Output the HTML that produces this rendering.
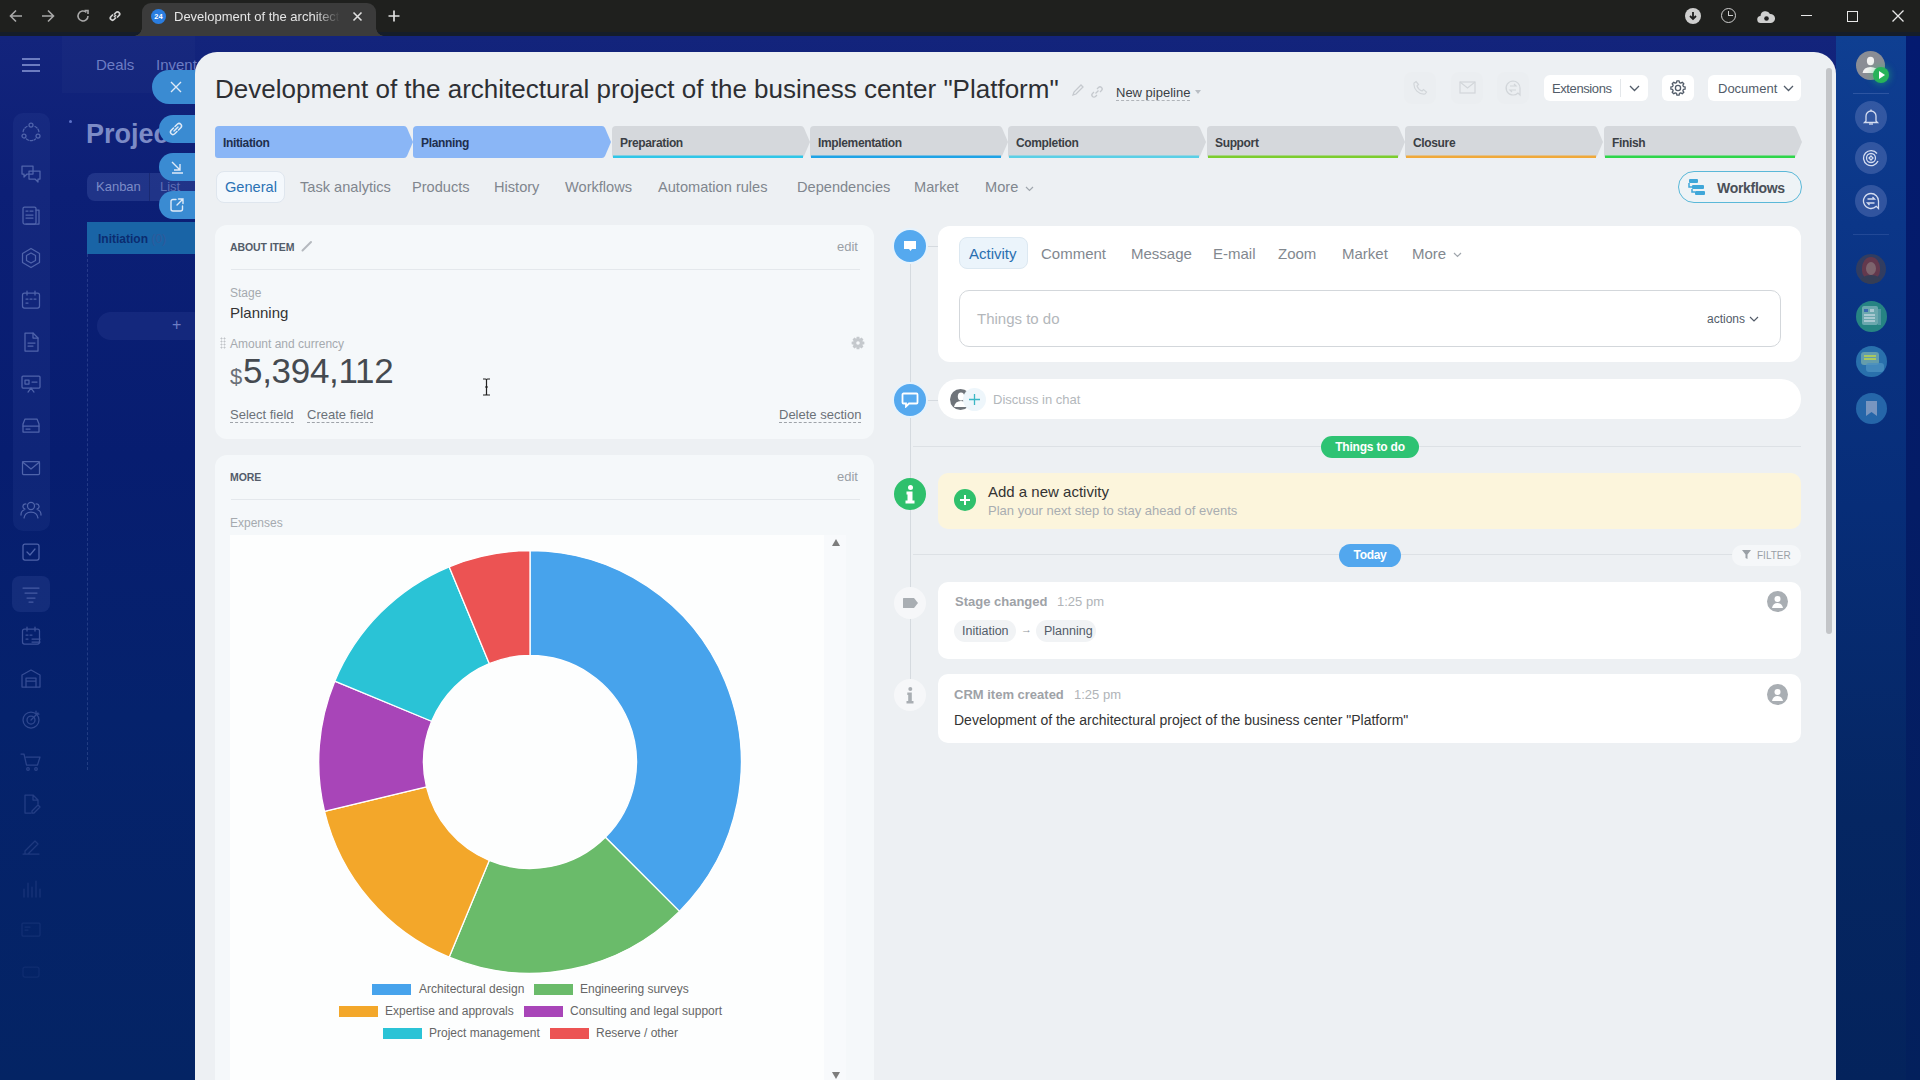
<!DOCTYPE html>
<html><head><meta charset="utf-8">
<style>
*{margin:0;padding:0;box-sizing:border-box}
html,body{width:1920px;height:1080px;overflow:hidden}
body{font-family:"Liberation Sans",sans-serif;background:#0f237c;position:relative;color:#333}
.a{position:absolute}
svg{display:block}
#bar{left:0;top:0;width:1920px;height:36px;background:#1f201e;border-bottom:4px solid #151d2a}
#tab{left:142px;top:3px;width:234px;height:33px;background:#3b3b3b;border-radius:9px 9px 0 0}
#bg{left:0;top:36px;width:1920px;height:1044px;background:linear-gradient(180deg,#13247c 0%,#0c1f76 15%,#071d70 40%,#05226c 65%,#042464 100%)}
#lnav{left:13px;top:113px;width:37px;height:418px;background:rgba(120,140,220,0.08);border-radius:10px}
.ni{left:20px;width:22px;height:22px}
#panel{left:195px;top:52px;width:1641px;height:1028px;background:#edf0f3;border-radius:22px 22px 0 0;overflow:hidden}
#rside{left:1836px;top:36px;width:70px;height:1044px;background:linear-gradient(180deg,#0f3f92 0%,#0b3688 18%,#072d78 45%,#052662 75%,#04235c 100%)}
#rside2{left:1906px;top:36px;width:14px;height:1044px;background:linear-gradient(180deg,#041a70 0%,#041c66 45%,#03205c 100%)}
.rb{width:32px;height:32px;border-radius:50%;background:rgba(120,140,200,0.35);left:1855px}
.sb{left:152px;background:#3a8bd2;border-radius:17px 0 0 17px}
</style></head><body>
<div id="bg" class="a"></div>
<!-- background app -->
<div class="a" style="left:62px;top:36px;width:133px;height:57px;background:rgba(255,255,255,0.02)"></div>
<div class="a" style="left:22px;top:58px;width:18px;height:2px;background:#6c7cc0;box-shadow:0 6px 0 #6c7cc0,0 12px 0 #6c7cc0"></div>
<div class="a" style="left:96px;top:56px;font-size:15px;color:#6d7dc4">Deals</div>
<div class="a" style="left:156px;top:56px;font-size:15px;color:#6d7dc4">Inventory</div>
<div class="a" style="left:86px;top:119px;font-size:27px;font-weight:bold;color:#7c8bc6">Projects</div>
<div class="a" style="left:69px;top:120px;width:3px;height:3px;border-radius:50%;background:#5d72c8"></div>
<div class="a" style="left:87px;top:173px;width:110px;height:28px;border-radius:8px;background:rgba(130,150,220,0.18)"></div>
<div class="a" style="left:149px;top:173px;width:1px;height:28px;background:rgba(0,0,30,0.2)"></div>
<div class="a" style="left:96px;top:179px;font-size:13px;color:#7c8bc6">Kanban</div>
<div class="a" style="left:160px;top:179px;font-size:13px;color:#5f6fb5">List</div>
<div class="a" style="left:87px;top:222px;width:120px;height:32px;background:#1964a6"></div>
<div class="a" style="left:98px;top:232px;font-size:12px;font-weight:bold;color:#0b2c70">Initiation <span style="font-weight:normal;color:#2f5a9a">(0)</span></div>
<div class="a" style="left:87px;top:254px;width:0;height:516px;border-left:1px dashed rgba(140,160,220,0.22)"></div>
<div class="a" style="left:97px;top:312px;width:110px;height:28px;border-radius:14px;background:rgba(120,140,220,0.1)"></div>
<div class="a" style="left:172px;top:316px;font-size:16px;color:#6d7dc4">+</div>

<div id="lnav" class="a"></div>
<!-- lnav icons -->
<div class="a" style="left:20px;top:121px;opacity:0.85"><svg width="22" height="22" viewBox="0 0 22 22" fill="none" stroke="#5b6fb4" stroke-width="1.25" stroke-linecap="round" stroke-linejoin="round"><circle cx="11" cy="4" r="2"/><circle cx="4" cy="15" r="2"/><circle cx="18" cy="15" r="2"/><path d="M7 5.5a7 7 0 0 0-4 6.5M15 5.5a7 7 0 0 1 4 6.5M6.5 18a7 7 0 0 0 9 0" stroke-dasharray="2.5 1.5"/></svg></div>
<div class="a" style="left:20px;top:163px;opacity:0.85"><svg width="22" height="22" viewBox="0 0 22 22" fill="none" stroke="#5b6fb4" stroke-width="1.25" stroke-linecap="round" stroke-linejoin="round"><path d="M2 3h11v8H7l-3 3v-3H2z"/><path d="M9 8h11v8h-2v3l-3-3H9z"/></svg></div>
<div class="a" style="left:20px;top:205px;opacity:0.85"><svg width="22" height="22" viewBox="0 0 22 22" fill="none" stroke="#5b6fb4" stroke-width="1.25" stroke-linecap="round" stroke-linejoin="round"><rect x="3" y="2" width="13" height="17" rx="1.5"/><path d="M16 5h3v14H6M6 6h2M10 6h3M6 10h7M6 13h7"/></svg></div>
<div class="a" style="left:20px;top:247px;opacity:0.85"><svg width="22" height="22" viewBox="0 0 22 22" fill="none" stroke="#5b6fb4" stroke-width="1.25" stroke-linecap="round" stroke-linejoin="round"><path d="M11 1.5l8.5 5v9L11 20.5 2.5 15.5v-9z"/><path d="M11 6l4.5 2.5v5L11 16l-4.5-2.5v-5z"/></svg></div>
<div class="a" style="left:20px;top:289px;opacity:0.85"><svg width="22" height="22" viewBox="0 0 22 22" fill="none" stroke="#5b6fb4" stroke-width="1.25" stroke-linecap="round" stroke-linejoin="round"><rect x="2.5" y="4" width="17" height="15" rx="2"/><path d="M7 2v4M15 2v4M6 10h2M10 10h2M14 10h2M6 14h2"/></svg></div>
<div class="a" style="left:20px;top:331px;opacity:0.85"><svg width="22" height="22" viewBox="0 0 22 22" fill="none" stroke="#5b6fb4" stroke-width="1.25" stroke-linecap="round" stroke-linejoin="round"><path d="M5 2h8l5 5v13H5z"/><path d="M13 2v5h5M8 12h7M8 15h5"/></svg></div>
<div class="a" style="left:20px;top:373px;opacity:0.85"><svg width="22" height="22" viewBox="0 0 22 22" fill="none" stroke="#5b6fb4" stroke-width="1.25" stroke-linecap="round" stroke-linejoin="round"><rect x="2" y="3" width="18" height="12" rx="1"/><path d="M5 7h4v4H5zM12 9h5M11 15l-3 4M11 15l3 4"/></svg></div>
<div class="a" style="left:20px;top:415px;opacity:0.85"><svg width="22" height="22" viewBox="0 0 22 22" fill="none" stroke="#5b6fb4" stroke-width="1.25" stroke-linecap="round" stroke-linejoin="round"><path d="M3 9l2-5h12l2 5v8H3z"/><path d="M3 11h16M6 14h4"/></svg></div>
<div class="a" style="left:20px;top:457px;opacity:0.85"><svg width="22" height="22" viewBox="0 0 22 22" fill="none" stroke="#5b6fb4" stroke-width="1.25" stroke-linecap="round" stroke-linejoin="round"><rect x="2.5" y="4.5" width="17" height="13" rx="1"/><path d="M2.5 5l8.5 7 8.5-7"/></svg></div>
<div class="a" style="left:20px;top:499px;opacity:0.85"><svg width="22" height="22" viewBox="0 0 22 22" fill="none" stroke="#5b6fb4" stroke-width="1.25" stroke-linecap="round" stroke-linejoin="round"><circle cx="11" cy="7" r="3.5"/><path d="M4 19q1-6 7-6t7 6M5 10a2.5 2.5 0 1 1 1-5M17 10a2.5 2.5 0 1 0-1-5M1 16q0-4 3-5M21 16q0-4-3-5"/></svg></div>
<div class="a" style="left:20px;top:541px;opacity:0.85"><svg width="22" height="22" viewBox="0 0 22 22" fill="none" stroke="#5b6fb4" stroke-width="1.25" stroke-linecap="round" stroke-linejoin="round"><rect x="3" y="3" width="16" height="16" rx="2"/><path d="M7 11l3 3 5-6"/></svg></div>
<div class="a" style="left:12px;top:576px;width:38px;height:36px;border-radius:8px;background:rgba(120,140,220,0.12)"></div>
<div class="a" style="left:20px;top:583px;opacity:0.70"><svg width="22" height="22" viewBox="0 0 22 22" fill="none" stroke="#5b6fb4" stroke-width="1.25" stroke-linecap="round" stroke-linejoin="round"><path d="M3 5h16M5 10h12M7 15h8M9 19h4"/></svg></div>
<div class="a" style="left:20px;top:625px;opacity:0.63"><svg width="22" height="22" viewBox="0 0 22 22" fill="none" stroke="#5b6fb4" stroke-width="1.25" stroke-linecap="round" stroke-linejoin="round"><rect x="2.5" y="4" width="17" height="15" rx="2"/><path d="M7 2v4M15 2v4M6 10h2M10 10h2M6 14h2M12 14h8M12 17h8"/></svg></div>
<div class="a" style="left:20px;top:667px;opacity:0.56"><svg width="22" height="22" viewBox="0 0 22 22" fill="none" stroke="#5b6fb4" stroke-width="1.25" stroke-linecap="round" stroke-linejoin="round"><path d="M2 8l9-5 9 5v12H2z"/><path d="M6 20v-9h10v9M6 14h10"/></svg></div>
<div class="a" style="left:20px;top:709px;opacity:0.50"><svg width="22" height="22" viewBox="0 0 22 22" fill="none" stroke="#5b6fb4" stroke-width="1.25" stroke-linecap="round" stroke-linejoin="round"><circle cx="11" cy="11" r="8"/><circle cx="11" cy="11" r="4"/><path d="M11 11l7-7M16 2v3h3"/></svg></div>
<div class="a" style="left:20px;top:751px;opacity:0.43"><svg width="22" height="22" viewBox="0 0 22 22" fill="none" stroke="#5b6fb4" stroke-width="1.25" stroke-linecap="round" stroke-linejoin="round"><path d="M1 3h3l2.5 11h11L20 6H6"/><circle cx="8" cy="18" r="1.3"/><circle cx="16" cy="18" r="1.3"/></svg></div>
<div class="a" style="left:20px;top:793px;opacity:0.36"><svg width="22" height="22" viewBox="0 0 22 22" fill="none" stroke="#5b6fb4" stroke-width="1.25" stroke-linecap="round" stroke-linejoin="round"><path d="M5 2h8l5 5v4M13 2v5h5M5 2v18h6"/><path d="M12 18l6-6 2 2-6 6h-2z"/></svg></div>
<div class="a" style="left:20px;top:835px;opacity:0.29"><svg width="22" height="22" viewBox="0 0 22 22" fill="none" stroke="#5b6fb4" stroke-width="1.25" stroke-linecap="round" stroke-linejoin="round"><path d="M3 19h16M5 16l10-10 3 3-10 10H5z"/></svg></div>
<div class="a" style="left:20px;top:877px;opacity:0.22"><svg width="22" height="22" viewBox="0 0 22 22" fill="none" stroke="#5b6fb4" stroke-width="1.25" stroke-linecap="round" stroke-linejoin="round"><path d="M4 20V12M8 20V6M12 20V10M16 20V4M20 20v-8"/></svg></div>
<div class="a" style="left:20px;top:919px;opacity:0.16"><svg width="22" height="22" viewBox="0 0 22 22" fill="none" stroke="#5b6fb4" stroke-width="1.25" stroke-linecap="round" stroke-linejoin="round"><rect x="2" y="4" width="18" height="13" rx="1"/><path d="M5 8h5M5 11h3"/></svg></div>
<div class="a" style="left:20px;top:961px;opacity:0.12"><svg width="22" height="22" viewBox="0 0 22 22" fill="none" stroke="#5b6fb4" stroke-width="1.25" stroke-linecap="round" stroke-linejoin="round"><rect x="3" y="6" width="16" height="10" rx="2"/></svg></div>

<!-- side buttons -->
<div class="a sb" style="top:70px;width:60px;height:34px"></div>
<div class="a sb" style="left:159px;top:115px;width:50px;height:28px;border-radius:14px 0 0 14px"></div>
<div class="a sb" style="left:159px;top:153px;width:50px;height:28px;border-radius:14px 0 0 14px"></div>
<div class="a sb" style="left:159px;top:191px;width:50px;height:28px;border-radius:14px 0 0 14px"></div>

<div class="a" style="left:170px;top:81px"><svg width="12" height="12" viewBox="0 0 12 12"><path d="M1 1l10 10M11 1L1 11" stroke="#dfeaf7" stroke-width="1.4"/></svg></div>
<div class="a" style="left:167px;top:120px"><svg width="18" height="18" viewBox="0 0 18 18"><path d="M7 11l4-4M6.5 8L4 10.5a2.5 2.5 0 0 0 3.5 3.5L10 11.5M11.5 10L14 7.5A2.5 2.5 0 0 0 10.5 4L8 6.5" fill="none" stroke="#dfeaf7" stroke-width="1.5" stroke-linecap="round"/></svg></div>
<div class="a" style="left:170px;top:160px"><svg width="14" height="14" viewBox="0 0 14 14"><path d="M2 2l8 8M4 10h6V4M2 13h11" fill="none" stroke="#dfeaf7" stroke-width="1.4"/></svg></div>
<div class="a" style="left:169px;top:197px"><svg width="16" height="16" viewBox="0 0 16 16"><path d="M7 2.5H4a2 2 0 0 0-2 2v7.5a2 2 0 0 0 2 2h7.5a2 2 0 0 0 2-2V9M9.5 2h4.5v4.5M14 2L8 8" fill="none" stroke="#dfeaf7" stroke-width="1.4" stroke-linecap="round"/></svg></div>
<div id="bar" class="a"></div>
<div id="tab" class="a"></div>
<div class="a" style="left:134px;top:28px;width:8px;height:8px;background:radial-gradient(circle at 0 0,transparent 7.5px,#3b3b3b 8px)"></div>
<div class="a" style="left:376px;top:28px;width:8px;height:8px;background:radial-gradient(circle at 100% 0,transparent 7.5px,#3b3b3b 8px)"></div>
<!-- browser chrome -->
<div class="a" style="left:9px;top:9px"><svg width="14" height="14" viewBox="0 0 14 14"><path d="M13 7H1.5M7 1.5L1.5 7 7 12.5" fill="none" stroke="#a9a9a9" stroke-width="1.6"/></svg></div>
<div class="a" style="left:41px;top:9px"><svg width="14" height="14" viewBox="0 0 14 14"><path d="M1 7h11.5M7 1.5L12.5 7 7 12.5" fill="none" stroke="#a9a9a9" stroke-width="1.6"/></svg></div>
<div class="a" style="left:76px;top:9px"><svg width="14" height="14" viewBox="0 0 14 14"><path d="M12 7a5 5 0 1 1-1.6-3.7" fill="none" stroke="#a9a9a9" stroke-width="1.6"/><path d="M8.5 1.5h3.5v3.5" fill="none" stroke="#a9a9a9" stroke-width="1.6"/></svg></div>
<div class="a" style="left:108px;top:9px"><svg width="14" height="14" viewBox="0 0 14 14"><path d="M6 8l2-2M5 5.5L3 7.5a2.1 2.1 0 0 0 3 3l2-2M9 8.5l2-2a2.1 2.1 0 0 0-3-3l-2 2" fill="none" stroke="#d4d4d4" stroke-width="1.7"/></svg></div>
<div class="a" style="left:151px;top:9px;width:15px;height:15px;border-radius:50%;background:#2a7de0"></div>
<div class="a" style="left:151px;top:12px;width:15px;text-align:center;font-size:7.5px;font-weight:bold;color:#fff">24</div>
<div class="a" style="left:174px;top:9px;width:166px;height:18px;overflow:hidden;white-space:nowrap;font-size:13px;color:#e6e6e6;-webkit-mask-image:linear-gradient(90deg,#000 85%,transparent)">Development of the architectural</div>
<div class="a" style="left:352px;top:11px"><svg width="11" height="11" viewBox="0 0 11 11"><path d="M1.5 1.5l8 8M9.5 1.5l-8 8" stroke="#e0e0e0" stroke-width="1.6"/></svg></div>
<div class="a" style="left:388px;top:10px"><svg width="12" height="12" viewBox="0 0 12 12"><path d="M6 0.5v11M0.5 6h11" stroke="#e0e0e0" stroke-width="1.7"/></svg></div>
<div class="a" style="left:1685px;top:8px;width:16px;height:16px;border-radius:50%;background:#cfcfcf"></div>
<div class="a" style="left:1688px;top:11px"><svg width="10" height="10" viewBox="0 0 10 10"><path d="M5 1v7M2 5l3 3 3-3" fill="none" stroke="#1f1f1f" stroke-width="1.8"/></svg></div>
<div class="a" style="left:1721px;top:8px;width:15px;height:15px;border-radius:50%;border:1.6px solid #cfcfcf"></div>
<div class="a" style="left:1728px;top:11px;width:5px;height:5px;border-left:1.6px solid #cfcfcf;border-bottom:1.6px solid #cfcfcf"></div>
<div class="a" style="left:1757px;top:9px"><svg width="18" height="15" viewBox="0 0 18 15"><path d="M4 14a3.5 3.5 0 0 1-.5-7A5 5 0 0 1 13 5a4.5 4.5 0 0 1 1 9z" fill="#cfcfcf"/><circle cx="9.5" cy="9.5" r="2.3" fill="#1f1f1f"/></svg></div>
<div class="a" style="left:1801px;top:15px;width:11px;height:1.3px;background:#e8e8e8"></div>
<div class="a" style="left:1847px;top:11px;width:11px;height:11px;border:1.3px solid #e8e8e8"></div>
<div class="a" style="left:1892px;top:10px"><svg width="12" height="12" viewBox="0 0 12 12"><path d="M0.5 0.5l11 11M11.5 0.5l-11 11" stroke="#e8e8e8" stroke-width="1.3"/></svg></div>


<div id="panel" class="a"></div>
<!-- header -->
<div class="a" style="left:215px;top:74px;font-size:26px;color:#2d2f33;white-space:nowrap;letter-spacing:0px" id="title">Development of the architectural project of the business center "Platform"</div>
<div class="a" style="left:1070px;top:82px"><svg width="16" height="16" viewBox="0 0 16 16"><path d="M3 13l1-3 7-7 2 2-7 7z" fill="none" stroke="#c5c9ce" stroke-width="1.3"/></svg></div>
<div class="a" style="left:1089px;top:84px"><svg width="16" height="16" viewBox="0 0 16 16"><path d="M6.5 9.5l3-3M5 8l-1.5 1.5a2 2 0 0 0 3 3L8 11M11 8l1.5-1.5a2 2 0 0 0-3-3L8 5" fill="none" stroke="#c5c9ce" stroke-width="1.3"/></svg></div>
<div class="a" style="left:1116px;top:85px;font-size:13px;color:#3a3f45;border-bottom:1px dashed #b0b4b9;line-height:15px">New pipeline</div>
<div class="a" style="left:1195px;top:90px;width:0;height:0;border-left:3.5px solid transparent;border-right:3.5px solid transparent;border-top:4px solid #b9bec4"></div>

<div class="a" style="left:215px;top:126px"><svg width="200" height="33" viewBox="0 0 200 33"><path d="M4 0 H189 Q191 0 192 2 L198 16 L192 30 Q191 32 189 32 H3 Q0 32 0 29 V4 Q0 0 4 0Z" fill="#8ab6f6"/></svg></div>
<div class="a" style="left:223px;top:136px;font-size:12px;font-weight:bold;letter-spacing:-0.35px;color:#1e2f4d">Initiation</div>
<div class="a" style="left:413px;top:126px"><svg width="200" height="33" viewBox="0 0 200 33"><path d="M4 0 H189 Q191 0 192 2 L198 16 L192 30 Q191 32 189 32 H3 Q0 32 0 29 V4 Q0 0 4 0Z" fill="#8ab6f6"/></svg></div>
<div class="a" style="left:421px;top:136px;font-size:12px;font-weight:bold;letter-spacing:-0.35px;color:#1e2f4d">Planning</div>
<div class="a" style="left:612px;top:126px"><svg width="200" height="33" viewBox="0 0 200 33"><path d="M4 0 H189 Q191 0 192 2 L198 16 L192 30 Q191 32 189 32 H3 Q0 32 0 29 V4 Q0 0 4 0Z" fill="#d5d8dc"/><path d="M1 30.7 L191 30.7" stroke="#2fc6e8" stroke-width="2.6" fill="none"/></svg></div>
<div class="a" style="left:620px;top:136px;font-size:12px;font-weight:bold;letter-spacing:-0.35px;color:#3b3f45">Preparation</div>
<div class="a" style="left:810px;top:126px"><svg width="200" height="33" viewBox="0 0 200 33"><path d="M4 0 H189 Q191 0 192 2 L198 16 L192 30 Q191 32 189 32 H3 Q0 32 0 29 V4 Q0 0 4 0Z" fill="#d5d8dc"/><path d="M1 30.7 L191 30.7" stroke="#1ea3e6" stroke-width="2.6" fill="none"/></svg></div>
<div class="a" style="left:818px;top:136px;font-size:12px;font-weight:bold;letter-spacing:-0.35px;color:#3b3f45">Implementation</div>
<div class="a" style="left:1008px;top:126px"><svg width="200" height="33" viewBox="0 0 200 33"><path d="M4 0 H189 Q191 0 192 2 L198 16 L192 30 Q191 32 189 32 H3 Q0 32 0 29 V4 Q0 0 4 0Z" fill="#d5d8dc"/><path d="M1 30.7 L191 30.7" stroke="#5acfe6" stroke-width="2.6" fill="none"/></svg></div>
<div class="a" style="left:1016px;top:136px;font-size:12px;font-weight:bold;letter-spacing:-0.35px;color:#3b3f45">Completion</div>
<div class="a" style="left:1207px;top:126px"><svg width="200" height="33" viewBox="0 0 200 33"><path d="M4 0 H189 Q191 0 192 2 L198 16 L192 30 Q191 32 189 32 H3 Q0 32 0 29 V4 Q0 0 4 0Z" fill="#d5d8dc"/><path d="M1 30.7 L191 30.7" stroke="#7ccd2e" stroke-width="2.6" fill="none"/></svg></div>
<div class="a" style="left:1215px;top:136px;font-size:12px;font-weight:bold;letter-spacing:-0.35px;color:#3b3f45">Support</div>
<div class="a" style="left:1405px;top:126px"><svg width="200" height="33" viewBox="0 0 200 33"><path d="M4 0 H189 Q191 0 192 2 L198 16 L192 30 Q191 32 189 32 H3 Q0 32 0 29 V4 Q0 0 4 0Z" fill="#d5d8dc"/><path d="M1 30.7 L191 30.7" stroke="#f0a93a" stroke-width="2.6" fill="none"/></svg></div>
<div class="a" style="left:1413px;top:136px;font-size:12px;font-weight:bold;letter-spacing:-0.35px;color:#3b3f45">Closure</div>
<div class="a" style="left:1604px;top:126px"><svg width="200" height="33" viewBox="0 0 200 33"><path d="M4 0 H189 Q191 0 192 2 L198 16 L192 30 Q191 32 189 32 H3 Q0 32 0 29 V4 Q0 0 4 0Z" fill="#d5d8dc"/><path d="M1 30.7 L191 30.7" stroke="#2ed64a" stroke-width="2.6" fill="none"/></svg></div>
<div class="a" style="left:1612px;top:136px;font-size:12px;font-weight:bold;letter-spacing:-0.35px;color:#3b3f45">Finish</div>
<div class="a" style="left:216px;top:171px;width:69px;height:32px;border-radius:8px;background:#f4f8fc;border:1px solid #dfe6ee"></div>
<div class="a" style="left:225px;top:179px;font-size:14.6px;color:#2a72b5">General</div>
<div class="a" style="left:300px;top:179px;font-size:14.6px;color:#80868e">Task analytics</div>
<div class="a" style="left:412px;top:179px;font-size:14.6px;color:#80868e">Products</div>
<div class="a" style="left:494px;top:179px;font-size:14.6px;color:#80868e">History</div>
<div class="a" style="left:565px;top:179px;font-size:14.6px;color:#80868e">Workflows</div>
<div class="a" style="left:658px;top:179px;font-size:14.6px;color:#80868e">Automation rules</div>
<div class="a" style="left:797px;top:179px;font-size:14.6px;color:#80868e">Dependencies</div>
<div class="a" style="left:914px;top:179px;font-size:14.6px;color:#80868e">Market</div>
<div class="a" style="left:985px;top:179px;font-size:14.6px;color:#80868e">More</div>
<div class="a" style="left:1025px;top:186px"><svg width="9" height="6" viewBox="0 0 9 6"><path d="M1 1l3.5 3.5L8 1" fill="none" stroke="#a0a6ad" stroke-width="1.2"/></svg></div>
<div class="a" style="left:1678px;top:171px;width:124px;height:32px;border-radius:16px;border:1.5px solid #5ab8d8;background:#eef3f6"></div>
<div class="a" style="left:1688px;top:178px"><svg width="18" height="18" viewBox="0 0 18 18"><rect x="1" y="1" width="9" height="4" rx="1" fill="#3fa7d9"/><rect x="4" y="7" width="12" height="4" rx="1" fill="#3fa7d9"/><rect x="7" y="13" width="10" height="4" rx="1" fill="#3fa7d9"/><path d="M1 5v4h3M4 11v3h3" stroke="#3fa7d9" fill="none" stroke-width="1.5"/></svg></div>
<div class="a" style="left:1717px;top:180px;font-size:14px;font-weight:bold;color:#4a5058;letter-spacing:-0.3px">Workflows</div>

<div class="a" style="left:1404px;top:72px;width:32px;height:32px;border-radius:8px;background:#ebeef1"></div>
<div class="a" style="left:1451px;top:72px;width:32px;height:32px;border-radius:8px;background:#ebeef1"></div>
<div class="a" style="left:1497px;top:72px;width:32px;height:32px;border-radius:8px;background:#ebeef1"></div>
<div class="a" style="left:1413px;top:80px"><svg width="15" height="15" viewBox="0 0 15 15"><path d="M3 1.5l2.5 3-1.5 1.5a8 8 0 0 0 5 5l1.5-1.5 3 2.5-1.5 2a10 10 0 0 1-11-11z" fill="none" stroke="#d2d6da" stroke-width="1.2"/></svg></div>
<div class="a" style="left:1459px;top:81px"><svg width="17" height="13" viewBox="0 0 17 13"><rect x="1" y="1" width="15" height="11" fill="none" stroke="#d2d6da" stroke-width="1.2"/><path d="M1 1l7.5 6L16 1" fill="none" stroke="#d2d6da" stroke-width="1.2"/></svg></div>
<div class="a" style="left:1504px;top:79px"><svg width="18" height="18" viewBox="0 0 18 18"><path d="M9 2a7 7 0 1 0 5 12l2 2v-7A7 7 0 0 0 9 2z" fill="none" stroke="#d2d6da" stroke-width="1.2"/><path d="M6 7h6l-2-2M12 11H6l2 2" fill="none" stroke="#d2d6da" stroke-width="1.2"/></svg></div>
<div class="a" style="left:1544px;top:75px;width:104px;height:26px;border-radius:6px;background:#fff"></div>
<div class="a" style="left:1620px;top:79px;width:1px;height:18px;background:#e4e7ea"></div>
<div class="a" style="left:1552px;top:81px;font-size:13px;color:#525c69;letter-spacing:-0.4px">Extensions</div>
<div class="a" style="left:1629px;top:85px"><svg width="11" height="7" viewBox="0 0 11 7"><path d="M1 1l4.5 4.5L10 1" fill="none" stroke="#525c69" stroke-width="1.3"/></svg></div>
<div class="a" style="left:1662px;top:75px;width:32px;height:26px;border-radius:6px;background:#fff"></div>
<div class="a" style="left:1669px;top:79px"><svg width="18" height="18" viewBox="0 0 18 18"><path d="M7.87 1.89 L10.13 1.89 L10.45 3.59 L11.80 4.15 L13.23 3.18 L14.82 4.77 L13.85 6.20 L14.41 7.55 L16.11 7.87 L16.11 10.13 L14.41 10.45 L13.85 11.80 L14.82 13.23 L13.23 14.82 L11.80 13.85 L10.45 14.41 L10.13 16.11 L7.87 16.11 L7.55 14.41 L6.20 13.85 L4.77 14.82 L3.18 13.23 L4.15 11.80 L3.59 10.45 L1.89 10.13 L1.89 7.87 L3.59 7.55 L4.15 6.20 L3.18 4.77 L4.77 3.18 L6.20 4.15 L7.55 3.59Z" fill="none" stroke="#525c69" stroke-width="1.3" stroke-linejoin="round"/><circle cx="9" cy="9" r="2.6" fill="none" stroke="#525c69" stroke-width="1.3"/></svg></div>
<div class="a" style="left:1708px;top:75px;width:93px;height:26px;border-radius:6px;background:#fff"></div>
<div class="a" style="left:1718px;top:81px;font-size:13px;color:#525c69">Document</div>
<div class="a" style="left:1783px;top:85px"><svg width="11" height="7" viewBox="0 0 11 7"><path d="M1 1l4.5 4.5L10 1" fill="none" stroke="#525c69" stroke-width="1.3"/></svg></div>
<div class="a" style="left:1826px;top:68px;width:6px;height:566px;border-radius:3px;background:#c3c5c8"></div>

<!-- left column -->
<div class="a" style="left:215px;top:225px;width:659px;height:214px;border-radius:12px;background:#f5f8fa"></div>
<div class="a" style="left:230px;top:241px;font-size:10.5px;font-weight:bold;color:#535c69;letter-spacing:-0.1px">ABOUT ITEM</div>
<div class="a" style="left:301px;top:240px"><svg width="12" height="12" viewBox="0 0 12 12"><path d="M1.5 10.5L10 2" stroke="#b5b9be" stroke-width="2" stroke-linecap="round"/></svg></div>
<div class="a" style="left:837px;top:239px;font-size:13px;color:#9aa0a6">edit</div>
<div class="a" style="left:231px;top:269px;width:629px;height:1px;background:#e4e8ec"></div>
<div class="a" style="left:230px;top:286px;font-size:12px;color:#a5aaaf">Stage</div>
<div class="a" style="left:230px;top:304px;font-size:15px;color:#333">Planning</div>
<div class="a" style="left:220px;top:337px;width:6px;height:12px;background-image:radial-gradient(circle,#c0c4c8 0.9px,transparent 1.1px);background-size:3px 3px"></div>
<div class="a" style="left:230px;top:337px;font-size:12px;color:#a5aaaf">Amount and currency</div>
<div class="a" style="left:851px;top:336px"><svg width="14" height="14" viewBox="0 0 14 14"><path d="M5.65 0.64 L8.35 0.64 L8.72 2.73 L8.80 2.77 L10.54 1.55 L12.45 3.46 L11.23 5.20 L11.27 5.28 L13.36 5.65 L13.36 8.35 L11.27 8.72 L11.23 8.80 L12.45 10.54 L10.54 12.45 L8.80 11.23 L8.72 11.27 L8.35 13.36 L5.65 13.36 L5.28 11.27 L5.20 11.23 L3.46 12.45 L1.55 10.54 L2.77 8.80 L2.73 8.72 L0.64 8.35 L0.64 5.65 L2.73 5.28 L2.77 5.20 L1.55 3.46 L3.46 1.55 L5.20 2.77 L5.28 2.73Z" fill="#c5c9cd"/><circle cx="7" cy="7" r="1.8" fill="#f5f8fa"/></svg></div>
<div class="a" style="left:230px;top:364px;font-size:22px;color:#6a7078">$</div>
<div class="a" style="left:243px;top:351px;font-size:35px;color:#454a50;letter-spacing:-0.3px" id="amt">5,394,112</div>
<div class="a" style="left:482px;top:378px"><svg width="9" height="18" viewBox="0 0 9 18"><path d="M1 1h2.5q1 0 1 1v14q0 1-1 1H1M8 1H5.5q-1 0-1 1v14q0 1 1 1H8M3 9h3" fill="none" stroke="#222" stroke-width="1.2"/></svg></div>
<div class="a" style="left:230px;top:407px;font-size:13px;color:#6b7178;border-bottom:1px dashed #9ea3a9;line-height:15px">Select field</div>
<div class="a" style="left:307px;top:407px;font-size:13px;color:#6b7178;border-bottom:1px dashed #9ea3a9;line-height:15px">Create field</div>
<div class="a" style="left:779px;top:407px;font-size:13px;color:#6b7178;border-bottom:1px dashed #9ea3a9;line-height:15px">Delete section</div>

<div class="a" style="left:215px;top:455px;width:659px;height:640px;border-radius:12px;background:#f5f8fa"></div>
<div class="a" style="left:230px;top:471px;font-size:10.5px;font-weight:bold;color:#535c69;letter-spacing:-0.1px">MORE</div>
<div class="a" style="left:837px;top:469px;font-size:13px;color:#9aa0a6">edit</div>
<div class="a" style="left:231px;top:499px;width:629px;height:1px;background:#e4e8ec"></div>
<div class="a" style="left:230px;top:516px;font-size:12px;color:#a5aaaf">Expenses</div>
<div class="a" style="left:230px;top:535px;width:594px;height:545px;background:#fdfefe"></div>
<div class="a" style="left:824px;top:535px;width:22px;height:545px;background:#f8fafc"></div>
<div class="a" style="left:832px;top:539px;width:0;height:0;border-left:4.5px solid transparent;border-right:4.5px solid transparent;border-bottom:7px solid #7d7d7d"></div>
<div class="a" style="left:832px;top:1072px;width:0;height:0;border-left:4.5px solid transparent;border-right:4.5px solid transparent;border-top:7px solid #7d7d7d"></div>

<svg class="a" style="left:0;top:0" width="1920" height="1080" viewBox="0 0 1920 1080"><path d="M530.00 550.70 A211.3 211.3 0 0 1 679.41 911.41 L605.31 837.31 A106.5 106.5 0 0 0 530.00 655.50Z" fill="#47a3ec" stroke="#fff" stroke-width="1.3" stroke-linejoin="round"/><path d="M679.41 911.41 A211.3 211.3 0 0 1 449.14 957.22 L489.24 860.39 A106.5 106.5 0 0 0 605.31 837.31Z" fill="#6abb6a" stroke="#fff" stroke-width="1.3" stroke-linejoin="round"/><path d="M449.14 957.22 A211.3 211.3 0 0 1 324.54 811.33 L426.44 786.86 A106.5 106.5 0 0 0 489.24 860.39Z" fill="#f3a72a" stroke="#fff" stroke-width="1.3" stroke-linejoin="round"/><path d="M324.54 811.33 A211.3 211.3 0 0 1 334.78 681.14 L431.61 721.24 A106.5 106.5 0 0 0 426.44 786.86Z" fill="#a845b8" stroke="#fff" stroke-width="1.3" stroke-linejoin="round"/><path d="M334.78 681.14 A211.3 211.3 0 0 1 449.14 566.78 L489.24 663.61 A106.5 106.5 0 0 0 431.61 721.24Z" fill="#2ac3d6" stroke="#fff" stroke-width="1.3" stroke-linejoin="round"/><path d="M449.14 566.78 A211.3 211.3 0 0 1 530.00 550.70 L530.00 655.50 A106.5 106.5 0 0 0 489.24 663.61Z" fill="#ec5353" stroke="#fff" stroke-width="1.3" stroke-linejoin="round"/></svg>
<div class="a" style="left:372px;top:984px;width:39px;height:11px;background:#47a3ec"></div>
<div class="a lg" style="left:419px;top:982px;font-size:12px;color:#666;white-space:nowrap">Architectural design</div>
<div class="a" style="left:534px;top:984px;width:39px;height:11px;background:#6abb6a"></div>
<div class="a lg" style="left:580px;top:982px;font-size:12px;color:#666;white-space:nowrap">Engineering surveys</div>
<div class="a" style="left:339px;top:1006px;width:39px;height:11px;background:#f3a72a"></div>
<div class="a lg" style="left:385px;top:1004px;font-size:12px;color:#666;white-space:nowrap">Expertise and approvals</div>
<div class="a" style="left:524px;top:1006px;width:39px;height:11px;background:#a845b8"></div>
<div class="a lg" style="left:570px;top:1004px;font-size:12px;color:#666;white-space:nowrap">Consulting and legal support</div>
<div class="a" style="left:383px;top:1028px;width:39px;height:11px;background:#2ac3d6"></div>
<div class="a lg" style="left:429px;top:1026px;font-size:12px;color:#666;white-space:nowrap">Project management</div>
<div class="a" style="left:550px;top:1028px;width:39px;height:11px;background:#ec5353"></div>
<div class="a lg" style="left:596px;top:1026px;font-size:12px;color:#666;white-space:nowrap">Reserve / other</div>
<!-- right column -->
<div class="a" style="left:910px;top:246px;width:1px;height:449px;background:#d5dadf"></div>
<div class="a" style="left:913px;top:446px;width:888px;height:1px;background:#dde1e5"></div>
<div class="a" style="left:913px;top:554px;width:888px;height:1px;background:#dde1e5"></div>
<div class="a" style="left:926px;top:246px;width:12px;height:1px;background:#d5dadf"></div>
<div class="a" style="left:926px;top:400px;width:12px;height:1px;background:#d5dadf"></div>
<div class="a" style="left:938px;top:226px;width:863px;height:136px;border-radius:12px;background:#fff"></div>
<div class="a" style="left:959px;top:237px;width:69px;height:32px;border-radius:8px;background:#ebf4fb;border:1px solid #dce8f1"></div>
<div class="a" style="left:969px;top:245px;font-size:15px;color:#2a6fb0">Activity</div>
<div class="a" style="left:1041px;top:245px;font-size:15px;color:#82888f">Comment</div>
<div class="a" style="left:1131px;top:245px;font-size:15px;color:#82888f">Message</div>
<div class="a" style="left:1213px;top:245px;font-size:15px;color:#82888f">E-mail</div>
<div class="a" style="left:1278px;top:245px;font-size:15px;color:#82888f">Zoom</div>
<div class="a" style="left:1342px;top:245px;font-size:15px;color:#82888f">Market</div>
<div class="a" style="left:1412px;top:245px;font-size:15px;color:#82888f">More</div>
<div class="a" style="left:1453px;top:252px"><svg width="9" height="6" viewBox="0 0 9 6"><path d="M1 1l3.5 3.5L8 1" fill="none" stroke="#a0a6ad" stroke-width="1.2"/></svg></div>
<div class="a" style="left:959px;top:290px;width:822px;height:57px;border-radius:10px;border:1px solid #d3d7db;background:#fff"></div>
<div class="a" style="left:977px;top:310px;font-size:15px;color:#b3b7bb">Things to do</div>
<div class="a" style="left:1707px;top:312px;font-size:12px;color:#535c69">actions</div>
<div class="a" style="left:1749px;top:316px"><svg width="10" height="7" viewBox="0 0 10 7"><path d="M1 1l4 4 4-4" fill="none" stroke="#535c69" stroke-width="1.2"/></svg></div>

<div class="a" style="left:894px;top:230px;width:32px;height:32px;border-radius:50%;background:#55a9ef;box-shadow:0 0 0 2px #e6f2fc"></div>
<div class="a" style="left:903px;top:240px"><svg width="14" height="13" viewBox="0 0 14 13"><path d="M1 1h12v8H9l-1.5 2L6 9H1z" fill="#fff"/></svg></div>

<div class="a" style="left:938px;top:379px;width:863px;height:40px;border-radius:20px;background:#fff"></div>
<div class="a" style="left:894px;top:384px;width:32px;height:32px;border-radius:50%;background:#55a9ef;box-shadow:0 0 0 2px #e6f2fc"></div>
<div class="a" style="left:901px;top:392px"><svg width="18" height="16" viewBox="0 0 18 16"><path d="M2.5 1.5h13a1 1 0 0 1 1 1v8a1 1 0 0 1-1 1H8l-3 3v-3H2.5a1 1 0 0 1-1-1v-8a1 1 0 0 1 1-1z" fill="none" stroke="#fff" stroke-width="1.8"/></svg></div>
<div class="a" style="left:950px;top:389px;width:21px;height:21px;border-radius:50%;background:#6f747a"></div>
<div class="a" style="left:954px;top:391px"><svg width="14" height="17" viewBox="0 0 14 17"><ellipse cx="7" cy="5.5" rx="3.2" ry="4" fill="#fff"/><path d="M0 16q1-6 7-6t7 6z" fill="#fff"/></svg></div>
<div class="a" style="left:963px;top:388px;width:23px;height:23px;border-radius:50%;background:#eef6fb"></div>
<div class="a" style="left:968px;top:393px"><svg width="13" height="13" viewBox="0 0 13 13"><path d="M6.5 1v11M1 6.5h11" stroke="#3ab7c5" stroke-width="1.3"/></svg></div>
<div class="a" style="left:993px;top:392px;font-size:13px;color:#b3b7bb">Discuss in chat</div>

<div class="a" style="left:1321px;top:436px;width:98px;height:22px;border-radius:11px;background:#2ec373"></div>
<div class="a" style="left:1321px;top:440px;width:98px;text-align:center;font-size:12px;font-weight:bold;color:#fff;letter-spacing:-0.2px">Things to do</div>

<div class="a" style="left:938px;top:473px;width:863px;height:56px;border-radius:10px;background:#fcf5dc"></div>
<div class="a" style="left:894px;top:478px;width:32px;height:32px;border-radius:50%;background:#2fc06c"></div>
<div class="a" style="left:894px;top:478px"><svg width="32" height="32" viewBox="0 0 32 32"><circle cx="16.5" cy="9.5" r="2.5" fill="#fff"/><path d="M12.5 13.5h6v9h2v3h-9v-3h2v-6h-1z" fill="#fff"/></svg></div>
<div class="a" style="left:954px;top:489px;width:22px;height:22px;border-radius:50%;background:#2fc06c"></div>
<div class="a" style="left:958px;top:493px"><svg width="14" height="14" viewBox="0 0 14 14"><path d="M7 2v10M2 7h10" stroke="#fff" stroke-width="2"/></svg></div>
<div class="a" style="left:988px;top:483px;font-size:15px;color:#333">Add a new activity</div>
<div class="a" style="left:988px;top:503px;font-size:13px;color:#a9adb1">Plan your next step to stay ahead of events</div>

<div class="a" style="left:1339px;top:544px;width:62px;height:23px;border-radius:12px;background:#52a7ee"></div>
<div class="a" style="left:1339px;top:548px;width:62px;text-align:center;font-size:12px;font-weight:bold;color:#fff;letter-spacing:-0.3px">Today</div>
<div class="a" style="left:1732px;top:545px;width:69px;height:21px;border-radius:10px;background:#f5f7f9"></div>
<div class="a" style="left:1741px;top:549px"><svg width="11" height="11" viewBox="0 0 11 11"><path d="M1 1h9L6.5 5.5V10L4.5 9V5.5z" fill="#9aa0a6"/></svg></div>
<div class="a" style="left:1757px;top:550px;font-size:10px;color:#9aa0a6">FILTER</div>

<div class="a" style="left:938px;top:582px;width:863px;height:77px;border-radius:10px;background:#fff"></div>
<div class="a" style="left:894px;top:587px;width:32px;height:32px;border-radius:50%;background:#f6f7f9"></div>
<div class="a" style="left:902px;top:597px"><svg width="17" height="12" viewBox="0 0 17 12"><path d="M1.5 1h10.5l4 5-4 5H1.5q-0.5 0-0.5-0.5v-9q0-0.5 0.5-0.5z" fill="#a9aeb3"/></svg></div>
<div class="a" style="left:955px;top:594px;font-size:13px;font-weight:bold;color:#9ea2a7">Stage changed</div>
<div class="a" style="left:1057px;top:594px;font-size:13px;color:#b0b4b8">1:25 pm</div>
<div class="a" style="left:954px;top:620px;width:62px;height:22px;border-radius:11px;background:#f1f3f5"></div>
<div class="a" style="left:962px;top:624px;font-size:12.5px;color:#535c69">Initiation</div>
<div class="a" style="left:1021px;top:623px;font-size:11px;color:#8d9298">&#8594;</div>
<div class="a" style="left:1036px;top:620px;width:60px;height:22px;border-radius:11px;background:#f1f3f5"></div>
<div class="a" style="left:1044px;top:624px;font-size:12.5px;color:#535c69">Planning</div>
<div class="a" style="left:1767px;top:591px;width:21px;height:21px;border-radius:50%;background:#a9aeb3"></div>
<div class="a" style="left:1771px;top:594px"><svg width="13" height="16" viewBox="0 0 13 16"><circle cx="6.5" cy="5" r="3" fill="#fff"/><path d="M1 14q1-5 5.5-5t5.5 5z" fill="#fff"/></svg></div>

<div class="a" style="left:938px;top:674px;width:863px;height:69px;border-radius:10px;background:#fff"></div>
<div class="a" style="left:894px;top:679px;width:32px;height:32px;border-radius:50%;background:#f6f7f9"></div>
<div class="a" style="left:894px;top:679px"><svg width="32" height="32" viewBox="0 0 32 32"><circle cx="16.3" cy="10" r="2" fill="#a9aeb3"/><path d="M13.3 13.5h4.5v8.5h1.7v2.5h-7v-2.5h1.7v-6h-0.9z" fill="#a9aeb3"/></svg></div>
<div class="a" style="left:954px;top:687px;font-size:13px;font-weight:bold;color:#9ea2a7">CRM item created</div>
<div class="a" style="left:1074px;top:687px;font-size:13px;color:#b0b4b8">1:25 pm</div>
<div class="a" style="left:954px;top:712px;font-size:14px;color:#333">Development of the architectural project of the business center "Platform"</div>
<div class="a" style="left:1767px;top:684px;width:21px;height:21px;border-radius:50%;background:#a9aeb3"></div>
<div class="a" style="left:1771px;top:687px"><svg width="13" height="16" viewBox="0 0 13 16"><circle cx="6.5" cy="5" r="3" fill="#fff"/><path d="M1 14q1-5 5.5-5t5.5 5z" fill="#fff"/></svg></div>

<div id="rside" class="a"></div>
<div id="rside2" class="a"></div>
<!-- right sidebar icons -->
<div class="a" style="left:1856px;top:51px;width:29px;height:29px;border-radius:50%;background:#8a8d95"></div>
<div class="a" style="left:1862px;top:55px"><svg width="17" height="20" viewBox="0 0 17 20"><ellipse cx="8.5" cy="6" rx="3.6" ry="4.2" fill="#f2f2f2"/><path d="M0.5 18q1-6 8-6t8 6z" fill="#f2f2f2"/></svg></div>
<div class="a" style="left:1873px;top:67px;width:16px;height:16px;border-radius:50%;background:#27b35a;box-shadow:0 0 6px 2px rgba(40,200,110,0.35)"></div>
<div class="a" style="left:1879px;top:71px;width:0;height:0;border-top:4px solid transparent;border-bottom:4px solid transparent;border-left:6px solid #fff"></div>
<div class="a" style="left:1853px;top:93px;width:36px;height:1px;background:rgba(140,160,220,0.25)"></div>
<div class="a rb" style="top:101px"></div>
<div class="a" style="left:1862px;top:108px"><svg width="18" height="18" viewBox="0 0 18 18" fill="none" stroke="#d4dcf0" stroke-width="1.3"><path d="M4 13V8a5 5 0 0 1 10 0v5l1.5 1.5h-13z"/><path d="M7 16h4"/><path d="M9 1.5v1.5"/></svg></div>
<div class="a rb" style="top:142px"></div>
<div class="a" style="left:1862px;top:149px"><svg width="18" height="18" viewBox="0 0 18 18" fill="none" stroke="#d4dcf0" stroke-width="1.3"><path d="M15 4.5A7.5 7.5 0 1 0 16 12"/><circle cx="9" cy="9" r="4.5"/><path d="M9 7l2 2-2 2-2-2z"/></svg></div>
<div class="a rb" style="top:185px"></div>
<div class="a" style="left:1862px;top:192px"><svg width="18" height="18" viewBox="0 0 18 18" fill="none" stroke="#d4dcf0" stroke-width="1.3"><path d="M9 1.5a7.5 7.5 0 1 0 5.3 12.8l2.2 2.2v-7.5A7.5 7.5 0 0 0 9 1.5z"/><path d="M5.5 7h7l-2-2M12.5 11h-7l2 2"/></svg></div>
<div class="a" style="left:1853px;top:234px;width:36px;height:1px;background:rgba(140,160,220,0.18)"></div>
<div class="a" style="left:1856px;top:254px;width:30px;height:30px;border-radius:50%;overflow:hidden;background:#3b3f58;opacity:0.8"><div class="a" style="left:6px;top:3px;width:18px;height:22px;border-radius:50% 50% 40% 40%;background:#7a3a40"></div><div class="a" style="left:10px;top:8px;width:10px;height:13px;border-radius:50%;background:#9a7068"></div><div class="a" style="left:4px;top:21px;width:22px;height:14px;border-radius:50% 50% 0 0;background:#40404a"></div></div>
<div class="a" style="left:1856px;top:301px;width:31px;height:31px;border-radius:50%;background:#2b9384;opacity:0.85"></div>
<div class="a" style="left:1862px;top:306px;width:16px;height:19px;background:#78aeb6;border-radius:2px;opacity:0.85"></div>
<div class="a" style="left:1864px;top:309px;width:4px;height:3px;background:#3a6ab0;box-shadow:6px 0 0 #a8c8d0"></div>
<div class="a" style="left:1864px;top:314px;width:11px;height:1.5px;background:#a8c8d0;box-shadow:0 3px 0 #a8c8d0,0 6px 0 #a8c8d0"></div>
<div class="a" style="left:1878px;top:309px;width:3px;height:16px;background:#5a9aa8;opacity:0.85"></div>
<div class="a" style="left:1856px;top:346px;width:31px;height:31px;border-radius:50%;background:#2f7bb4;opacity:0.85"></div>
<div class="a" style="left:1861px;top:352px;width:18px;height:13px;background:#6ea4ac;border-radius:3px;opacity:0.85"></div>
<div class="a" style="left:1864px;top:355px;width:12px;height:2px;background:#a8c860;box-shadow:0 3px 0 #a8c860"></div>
<div class="a" style="left:1866px;top:363px;width:18px;height:9px;background:#4a90c0;border-radius:3px;opacity:0.8"></div>
<div class="a" style="left:1856px;top:393px;width:31px;height:31px;border-radius:50%;background:#2a70b0;opacity:0.85"></div>
<div class="a" style="left:1865px;top:400px"><svg width="13" height="17" viewBox="0 0 13 17"><path d="M1 1h11v15l-5.5-4-5.5 4z" fill="#7896c0"/></svg></div>
</body></html>
